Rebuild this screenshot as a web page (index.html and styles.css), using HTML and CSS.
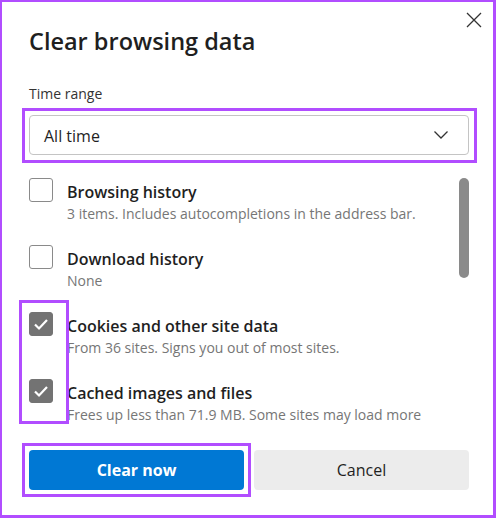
FILE: index.html
```html
<!DOCTYPE html>
<html lang="en">
<head>
<meta charset="utf-8">
<title>Clear browsing data</title>
<link rel="stylesheet" href="styles.css">
</head>
<body>
<div class="frame">
  <div class="header">
    <h1 class="title">Clear browsing data</h1>
    <button class="close" aria-label="Close">
      <svg width="16" height="16" viewBox="0 0 16 16"><path d="M1 1 L15 15 M15 1 L1 15" stroke="#333" stroke-width="1.3" fill="none"/></svg>
    </button>
  </div>
  <div class="label">Time range</div>
  <div class="select hl">
    <span class="select-value">All time</span>
    <svg class="chev" width="16" height="10" viewBox="0 0 16 10"><path d="M1.5 1.5 L8 8 L14.5 1.5" stroke="#333" stroke-width="1.3" fill="none"/></svg>
  </div>
  <div class="list-wrap">
    <div class="list">
      <div class="item">
        <span class="box"></span>
        <div class="text">
          <div class="item-title">Browsing history</div>
          <div class="item-desc">3 items. Includes autocompletions in the address bar.</div>
        </div>
      </div>
      <div class="item">
        <span class="box"></span>
        <div class="text">
          <div class="item-title">Download history</div>
          <div class="item-desc">None</div>
        </div>
      </div>
      <div class="group">
        <div class="item">
          <span class="box checked"><svg width="18" height="18" viewBox="0 0 18 18"><path d="M3 9.5 L7 13.5 L15 5" stroke="#fff" stroke-width="2.2" fill="none"/></svg></span>
          <div class="text">
            <div class="item-title">Cookies and other site data</div>
            <div class="item-desc">From 36 sites. Signs you out of most sites.</div>
          </div>
        </div>
        <div class="item">
          <span class="box checked"><svg width="18" height="18" viewBox="0 0 18 18"><path d="M3 9.5 L7 13.5 L15 5" stroke="#fff" stroke-width="2.2" fill="none"/></svg></span>
          <div class="text">
            <div class="item-title">Cached images and files</div>
            <div class="item-desc">Frees up less than 71.9 MB. Some sites may load more</div>
          </div>
        </div>
      </div>
    </div>
    <div class="thumb"></div>
  </div>
  <div class="buttons">
    <button class="btn primary hl">Clear now</button>
    <button class="btn secondary">Cancel</button>
  </div>
</div>
</body>
</html>
```
FILE: styles.css
```css
* { box-sizing: border-box; }
html, body { margin: 0; padding: 0; }
body {
  width: 496px;
  height: 518px;
  font-family: "Open Sans", "Noto Sans", sans-serif;
  color: #1f1f1f;
  background: #fff;
}
.frame {
  width: 496px;
  height: 518px;
  border-style: solid;
  border-color: #b14dff;
  border-width: 2px 3px 3px 2px;
  padding: 23px 24px 0 27px;
  display: flex;
  flex-direction: column;
}
.header {
  display: flex;
  justify-content: space-between;
  align-items: flex-start;
}
.title {
  margin: 0;
  font-size: 23.5px;
  line-height: 32px;
  font-weight: 600;
  color: #1f1f1f;
}
.close {
  margin: -13px -13px 0 0;
  padding: 0;
  border: 0;
  background: none;
  width: 16px;
  height: 16px;
  display: flex;
}
.label {
  margin-top: 27px;
  font-size: 14px;
  line-height: 20px;
  color: #333;
}
.hl { position: relative; }
.hl::before {
  content: "";
  position: absolute;
  left: -7px;
  top: -7px;
  right: -7px;
  bottom: -7px;
  border: 3px solid #b14dff;
  pointer-events: none;
}
.select {
  margin-top: 11px;
  height: 40px;
  border: 1px solid #c4c4c4;
  border-radius: 4px;
  display: flex;
  align-items: center;
  justify-content: space-between;
  padding: 2px 19px 0 14px;
}
.select.hl::before { left: -8px; top: -8px; right: -9px; bottom: -9px; }
.select-value {
  font-size: 16px;
  color: #1f1f1f;
}
.chev { margin-top: -2px; }
.list-wrap {
  margin-top: 23px;
  display: flex;
  height: 252px;
}
.list {
  flex: 1;
  min-width: 0;
  display: flex;
  flex-direction: column;
  gap: 21px;
}
.group {
  position: relative;
  display: flex;
  flex-direction: column;
  gap: 21px;
}
.group::before {
  content: "";
  position: absolute;
  left: -10px;
  top: -12px;
  width: 44px;
  height: 118px;
  border: 3px solid #b14dff;
}
.item {
  display: flex;
  gap: 14px;
  height: 46px;
}
.box {
  flex: none;
  width: 24px;
  height: 24px;
  border: 1px solid #8a8a8a;
  border-radius: 3px;
  display: flex;
  align-items: center;
  justify-content: center;
}
.box.checked {
  background: #737373;
  border-color: #737373;
}
.text { padding-top: 3px; }
.item-title {
  font-size: 16px;
  line-height: 22px;
  font-weight: 600;
  color: #1f1f1f;
}
.item-desc {
  margin-top: 1px;
  font-size: 14px;
  line-height: 20px;
  color: #767676;
  white-space: nowrap;
}
.thumb {
  flex: none;
  width: 10px;
  height: 100px;
  border-radius: 5px;
  background: #8a8a8a;
}
.buttons {
  margin-top: 20px;
  display: flex;
  gap: 10px;
}
.btn {
  width: 215px;
  height: 40px;
  border: 0;
  border-radius: 4px;
  font-family: inherit;
  font-size: 16px;
  padding: 0;
}
.primary {
  background: #0078d4;
  color: #fff;
  font-weight: 700;
}
.secondary {
  background: #ececec;
  color: #1f1f1f;
}
```
